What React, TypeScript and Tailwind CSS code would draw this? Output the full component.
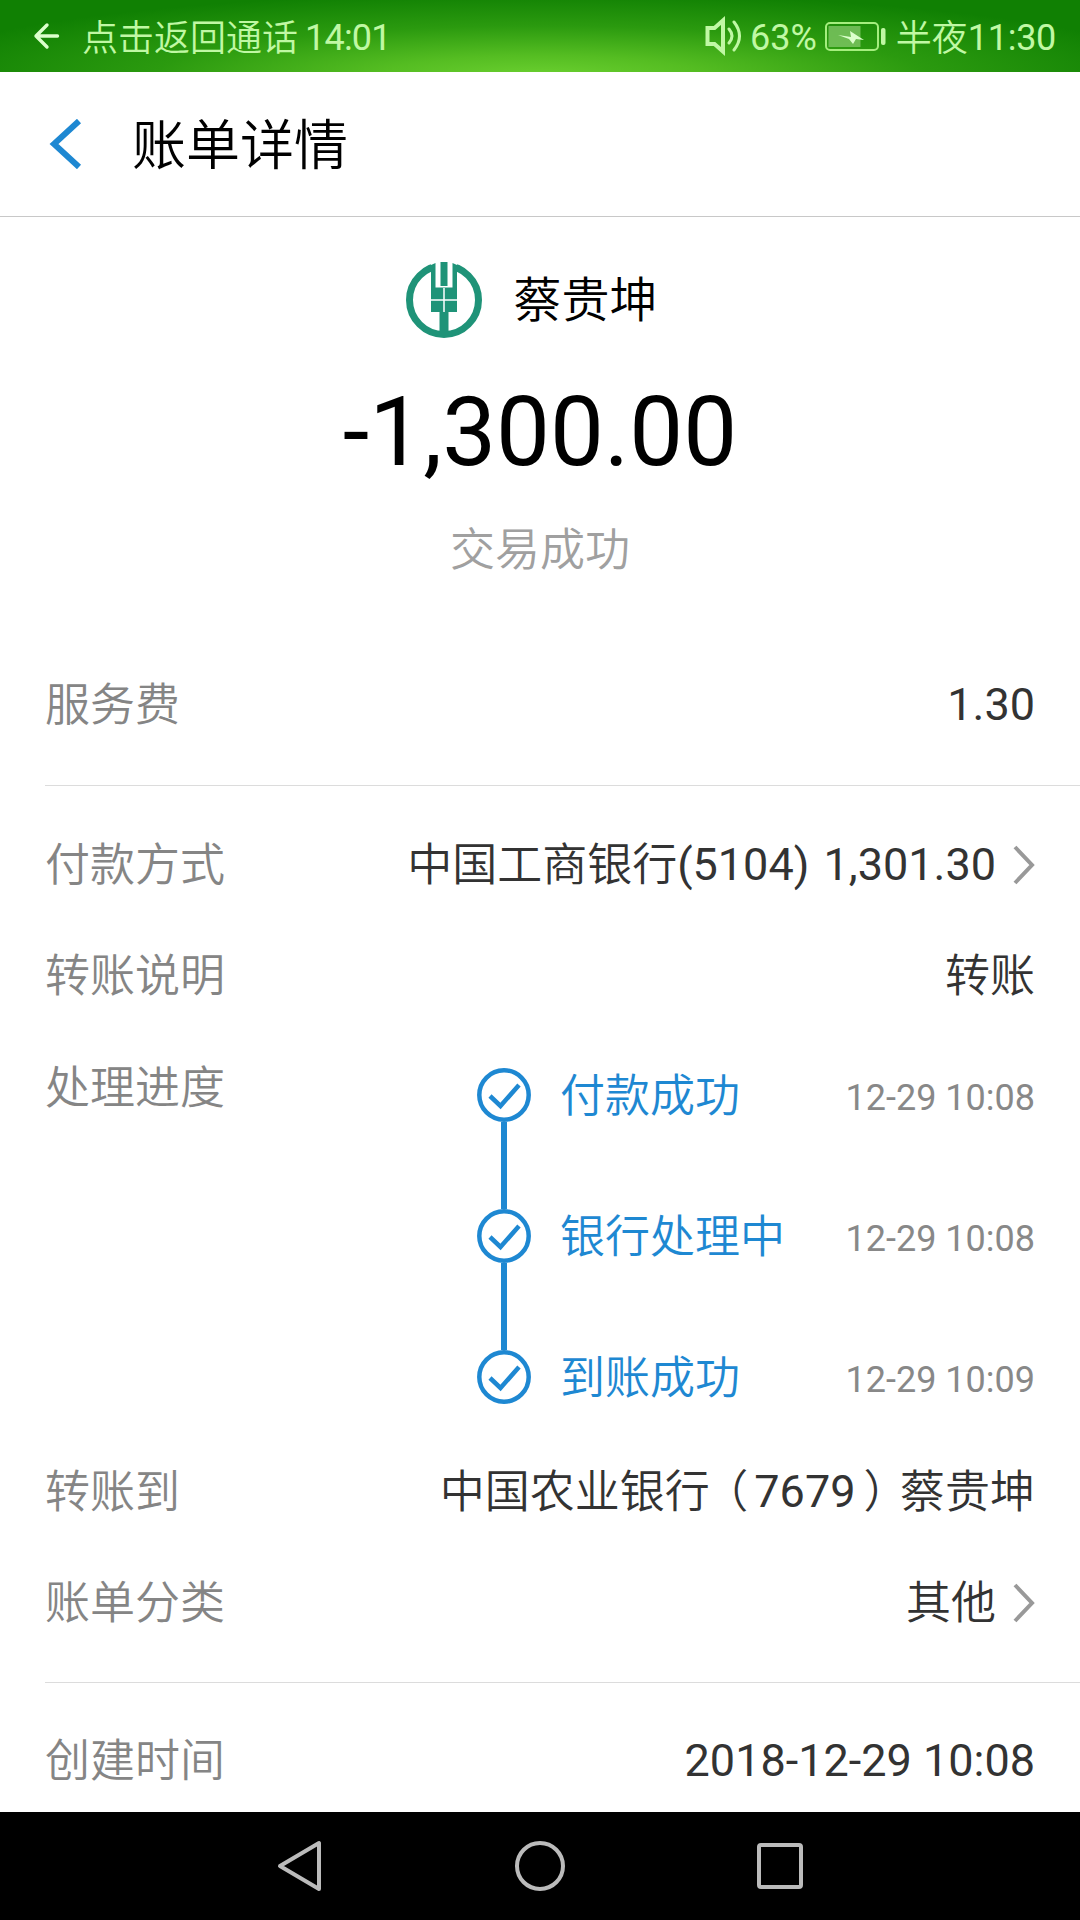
import { Fragment, type ReactNode } from "react";

const steps = [
  { label: "付款成功", time: "12-29 10:08" },
  { label: "银行处理中", time: "12-29 10:08" },
  { label: "到账成功", time: "12-29 10:09" },
];

function StatusBar() {
  return (
    <div className="flex h-[72px] shrink-0 items-center justify-between bg-[radial-gradient(ellipse_640px_84px_at_50%_106%,#6bd030_0%,#55bd22_25%,#2b9a0f_60%,#108003_100%)] pr-[24px] pl-[33px] text-[36px] leading-[54px] text-[#c0f8a4]">
      <div className="flex items-center">
        <svg width="28" height="28" viewBox="0 0 28 28" fill="none" stroke="#dcffcc" strokeWidth="3.4" strokeLinecap="round" strokeLinejoin="round">
          <path d="M14 3 3 14l11 11M3 14h21.500" />
        </svg>
        <span className="mt-[6px] ml-[21px] font-[350]">点击返回通话</span>
        <span className="mt-[3px] ml-[7px] tracking-[-0.8px]">14:01</span>
      </div>
      <div className="flex items-center">
        <svg width="42" height="42" viewBox="0 0 42 42" fill="none" stroke="#c0f8a4" strokeWidth="4">
          <path d="M4.500 13h7l8.500-7.500v31L11.500 29h-7z" />
          <path d="M26 14q6 7 0 14M31 7q11 14 0 28" strokeWidth="3" strokeLinecap="round" />
        </svg>
        <span className="mt-[3px] ml-[5px]">63%</span>
        <svg className="mt-[2px] ml-[7px]" width="64" height="32" viewBox="0 0 64 32">
          <rect x="2" y="2" width="52" height="27" rx="4" fill="none" stroke="#a5ee7e" strokeWidth="2" />
          <rect x="4.500" y="5" width="32" height="21" fill="#7fc565" fillOpacity="0.8" />
          <path d="m14 14 13 2-1-6 14 9-8-1-3 5-4-5z" fill="#dcffcc" />
          <rect x="57" y="7" width="4.500" height="17" rx="2" fill="#c0f8a4" />
        </svg>
        <span className="mt-[6px] ml-[8px] font-[350]">半夜</span>
        <span className="mt-[3px] tracking-[-0.3px]">11:30</span>
      </div>
    </div>
  );
}

function BankLogo() {
  return (
    <svg width="76" height="76" viewBox="0 0 76 76">
      <circle cx="38" cy="38" r="34.500" fill="none" stroke="#1f9378" strokeWidth="7" />
      <path d="M25 0h26v12H25z" fill="#fff" />
      <path d="M25 3l4.500-2v24.500h17V1L51 3v47h-8.500v24h-9V50H25z" fill="#1f9378" />
      <path d="M34.500 0h7v24h-7z" fill="#1f9378" />
      <path d="M38 26v24M25 38h26" stroke="#fff" strokeWidth="1.500" />
    </svg>
  );
}

function Chevron() {
  return (
    <svg className="ml-[17px]" width="22" height="40" viewBox="0 0 22 40" fill="none" stroke="#999" strokeWidth="4">
      <path d="M2 2l17 18L2 38" />
    </svg>
  );
}

function Row({ label, children }: { label: string; children: ReactNode }) {
  return (
    <div className="flex h-[111px] items-center justify-between pt-[2px] pr-[45px]">
      <span className="mt-[3px] font-[350] text-[#858585]">{label}</span>
      <div className="flex items-center text-[#333]">{children}</div>
    </div>
  );
}

function CheckMark() {
  return (
    <svg className="shrink-0" width="54" height="54" viewBox="0 0 54 54" fill="none" stroke="#1e88d2" strokeWidth="4.500">
      <circle cx="27" cy="27" r="24.700" />
      <path d="m13 28 10.500 10L42 17" />
    </svg>
  );
}

function Progress() {
  return (
    <div className="flex h-[405px] justify-between pr-[45px]">
      <span className="pt-[3px] leading-[111px] font-[350] text-[#858585]">处理进度</span>
      <div className="w-[558px] pt-[38px]">
        {steps.map((step, i) => (
          <Fragment key={step.label}>
            {i > 0 && <div className="ml-[24px] h-[87px] w-[6px] bg-[#1e88d2]" />}
            <div className="flex h-[54px] items-center">
              <CheckMark />
              <span className="mt-[4px] ml-[29px] flex-1 font-[350] text-[#1e88d2]">{step.label}</span>
              <span className="mt-[5px] text-[36px] text-[#888]">{step.time}</span>
            </div>
          </Fragment>
        ))}
      </div>
    </div>
  );
}

export default function App() {
  return (
    <div className="flex h-[1920px] w-[1080px] flex-col overflow-hidden bg-white font-[Roboto,'Noto_Sans_CJK_SC',sans-serif] text-[45px] leading-[54px]">
      <StatusBar />

      <header className="flex h-[145px] shrink-0 items-center border-b border-[#c8c8c8] pl-[48px]">
        <svg width="36" height="50" viewBox="0 0 36 50" fill="none" stroke="#1e88d2" strokeWidth="6">
          <path d="M31 2 6 25l25 23" />
        </svg>
        <h1 className="mt-[6px] ml-[48px] text-[54px] font-[350] text-black">账单详情</h1>
      </header>

      <section className="flex h-[431px] shrink-0 flex-col items-center pt-[45px]">
        <div className="flex h-[76px] items-center gap-[31px] pr-[16px]">
          <BankLogo />
          <span className="mt-[2px] text-[48px] font-[350] text-black">蔡贵坤</span>
        </div>
        <p className="mt-[46px] text-[96px] leading-[96px] text-black">-1,300.00</p>
        <p className="mt-[44px] font-[350] text-[#a0a0a0]">交易成功</p>
      </section>

      <div className="min-h-0 flex-1 overflow-hidden pl-[45px]">
        <div className="h-[138px] border-b border-[#dcdcdc]">
          <Row label="服务费">1.30</Row>
        </div>
        <div className="border-b border-[#dcdcdc] pt-[22px] pb-[25px]">
          <Row label="付款方式">
            <span className="mt-[3px] font-[350]">中国工商银行</span>
            <span className="whitespace-pre [word-spacing:3px]">(5104) 1,301.30</span>
            <Chevron />
          </Row>
          <Row label="转账说明">
            <span className="mt-[3px] font-[350]">转账</span>
          </Row>
          <Progress />
          <Row label="转账到">
            <span className="mt-[3px] font-[350]">中国农业银行</span>
            <span className="mt-[3px] mr-[6px] ml-[16px] font-[350] [font-feature-settings:'halt']">（</span>
            <span>7679</span>
            <span className="mt-[3px] mr-[14px] ml-[8px] font-[350] [font-feature-settings:'halt']">）</span>
            <span className="mt-[3px] font-[350]">蔡贵坤</span>
          </Row>
          <Row label="账单分类">
            <span className="mt-[3px] font-[350]">其他</span>
            <Chevron />
          </Row>
        </div>
        <div className="pt-[21px]">
          <Row label="创建时间">2018-12-29 10:08</Row>
        </div>
      </div>

      <nav className="flex h-[108px] shrink-0 items-center bg-black pl-[276px]">
        <svg width="48" height="54" viewBox="0 0 48 54" fill="none" stroke="#bbb" strokeWidth="4" strokeLinejoin="round">
          <path d="M43 4v46L4 27z" />
        </svg>
        <svg className="ml-[189px]" width="54" height="54" viewBox="0 0 54 54" fill="none" stroke="#bbb" strokeWidth="4">
          <circle cx="27" cy="27" r="23" />
        </svg>
        <svg className="ml-[189px]" width="48" height="48" viewBox="0 0 48 48" fill="none" stroke="#bbb" strokeWidth="4">
          <rect x="3" y="3" width="42" height="42" rx="2" />
        </svg>
      </nav>
    </div>
  );
}
